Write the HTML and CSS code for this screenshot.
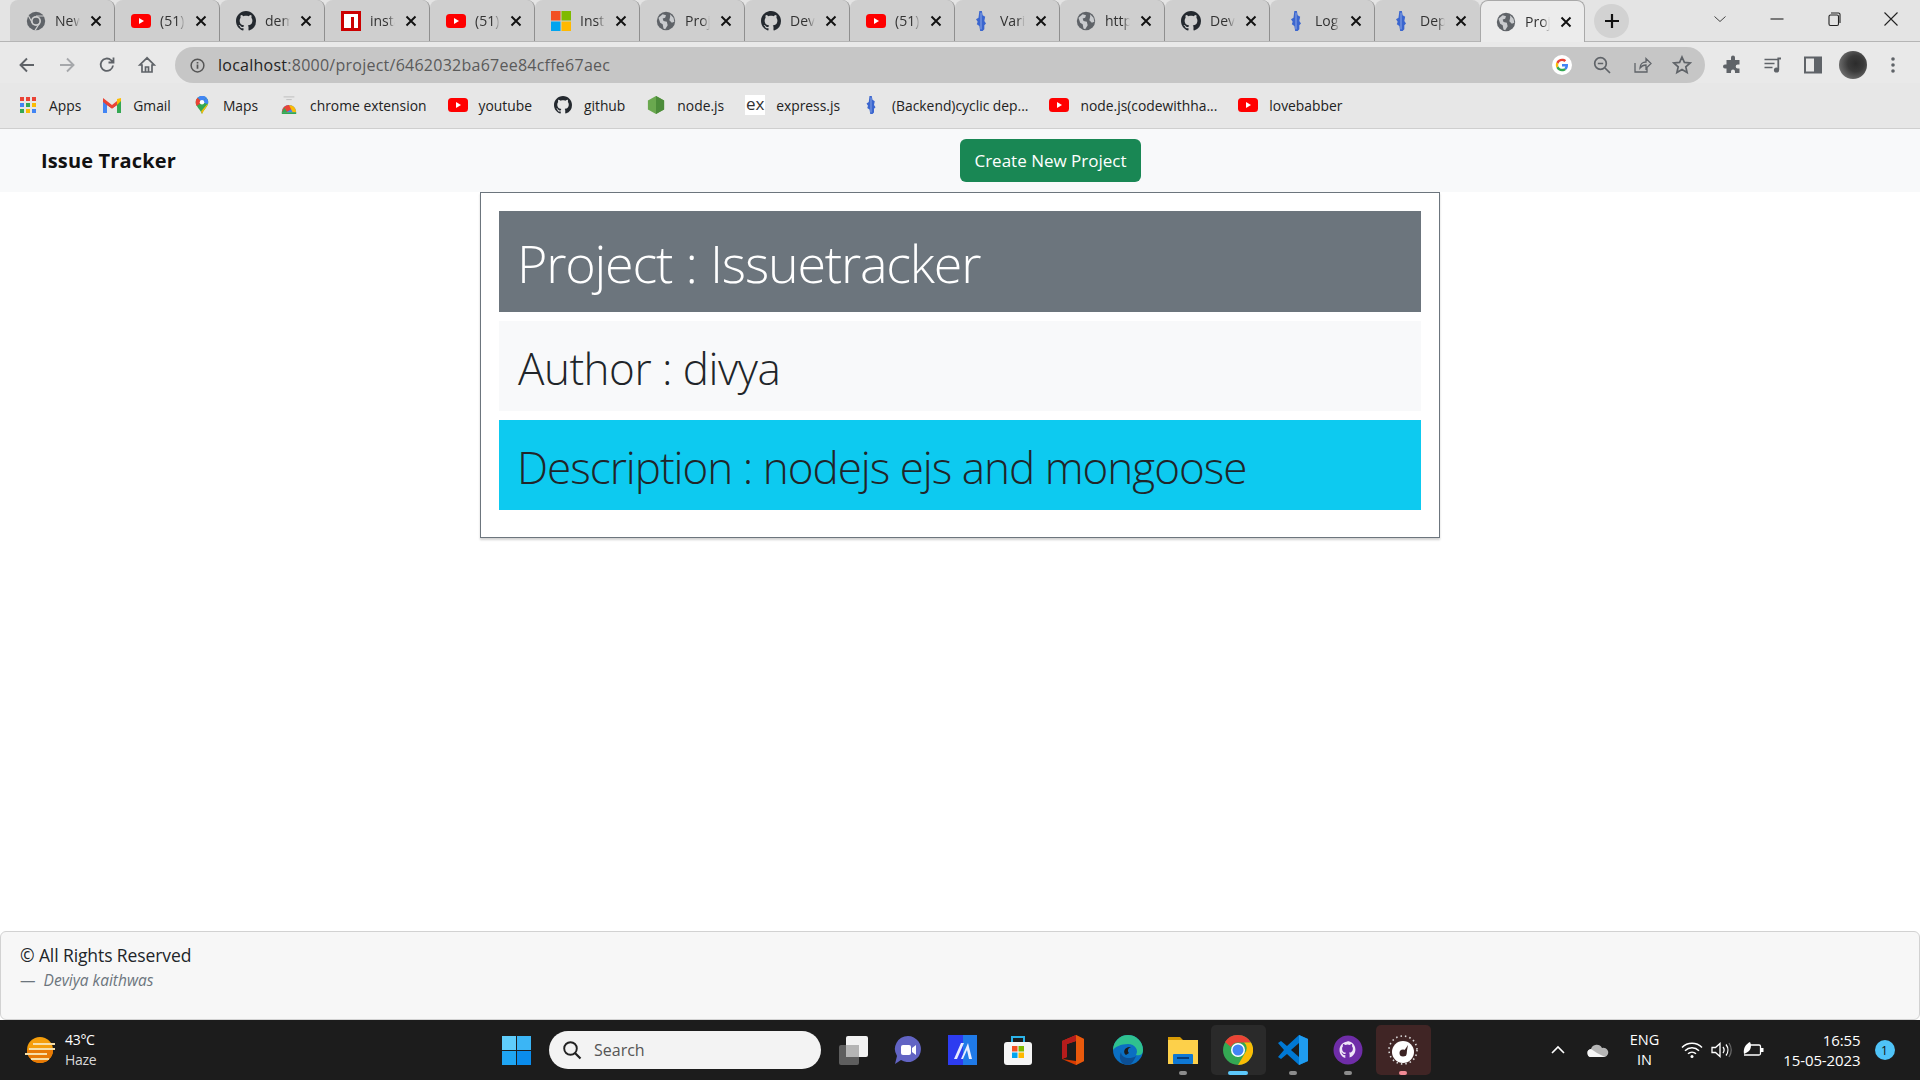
FILE: index.html
```html
<!DOCTYPE html>
<html lang="en">
<head>
<meta charset="utf-8">
<title>Project</title>
<link rel="stylesheet" href="styles.css">
</head>
<body>
<svg class="defs" xmlns="http://www.w3.org/2000/svg">
  <symbol id="i-chrome" viewBox="0 0 24 24"><circle cx="12" cy="12" r="11" fill="#5f6368"/><circle cx="12" cy="12" r="6" fill="#cfcfcf"/><circle cx="12" cy="12" r="4" fill="#5f6368"/><path d="M12 6h10M8 15L3 6M16 15l-5 8" stroke="#cfcfcf" stroke-width="1.4"/></symbol>
  <symbol id="i-yt" viewBox="0 0 20 14"><rect width="20" height="14" rx="3.5" fill="#f00"/><path d="M8 4l5 3-5 3z" fill="#fff"/></symbol>
  <symbol id="i-gh" viewBox="0 0 16 16"><path fill="#24292f" d="M8 0C3.58 0 0 3.58 0 8c0 3.54 2.29 6.53 5.47 7.59.4.07.55-.17.55-.38 0-.19-.01-.82-.01-1.49-2.01.37-2.53-.49-2.69-.94-.09-.23-.48-.94-.82-1.13-.28-.15-.68-.52-.01-.53.63-.01 1.08.58 1.23.82.72 1.21 1.87.87 2.33.66.07-.52.28-.87.51-1.07-1.78-.2-3.64-.89-3.64-3.95 0-.87.31-1.59.82-2.15-.08-.2-.36-1.02.08-2.12 0 0 .67-.21 2.2.82.64-.18 1.32-.27 2-.27s1.36.09 2 .27c1.53-1.04 2.2-.82 2.2-.82.44 1.1.16 1.92.08 2.12.51.56.82 1.27.82 2.15 0 3.07-1.87 3.75-3.65 3.95.29.25.54.73.54 1.48 0 1.07-.01 1.93-.01 2.2 0 .21.15.46.55.38A8.01 8.01 0 0016 8c0-4.42-3.58-8-8-8z"/></symbol>
  <symbol id="i-globe" viewBox="0 0 24 24"><circle cx="12" cy="12" r="11" fill="#5f6368"/><path d="M3 8l5-4 4 1-1 3-3 1 1 3 4 1 1 4-3 5-2-1-1-5-3-2zM17 4l4 4 1 5-3 1-3-3 1-4z" fill="#c9cbce"/></symbol>
  <symbol id="i-npm" viewBox="0 0 20 20"><rect width="20" height="20" fill="#c00"/><path d="M3 3h14v14h-4V6h-3v11H3z" fill="#fff"/></symbol>
  <symbol id="i-ms" viewBox="0 0 20 20"><rect width="9.5" height="9.5" fill="#f25022"/><rect x="10.5" width="9.5" height="9.5" fill="#7fba00"/><rect y="10.5" width="9.5" height="9.5" fill="#00a4ef"/><rect x="10.5" y="10.5" width="9.5" height="9.5" fill="#ffb900"/></symbol>
  <symbol id="i-render" viewBox="0 0 12 24"><path d="M4 0h3l1 5 3 2-1 5 2 3-2 2v5l-2 2H5l-1-6-3-2 1-3-2-3 3-2z" fill="#3b66cf"/><path d="M6 2v20" stroke="#9fb6ea" stroke-width="1"/></symbol>
  <symbol id="i-x" viewBox="0 0 12 12"><path d="M1.5 1.5l9 9M10.5 1.5l-9 9" stroke="#111" stroke-width="1.9" fill="none"/></symbol>
</svg>

<header class="tabstrip">
  <div class="tab"><svg class="fav"><use href="#i-chrome"/></svg><span class="tab-title">New</span><svg class="tab-x"><use href="#i-x"/></svg></div>
  <div class="tab"><svg class="fav"><use href="#i-yt"/></svg><span class="tab-title">(51)</span><svg class="tab-x"><use href="#i-x"/></svg></div>
  <div class="tab"><svg class="fav"><use href="#i-gh"/></svg><span class="tab-title">dem</span><svg class="tab-x"><use href="#i-x"/></svg></div>
  <div class="tab"><svg class="fav"><use href="#i-npm"/></svg><span class="tab-title">insta</span><svg class="tab-x"><use href="#i-x"/></svg></div>
  <div class="tab"><svg class="fav"><use href="#i-yt"/></svg><span class="tab-title">(51)</span><svg class="tab-x"><use href="#i-x"/></svg></div>
  <div class="tab"><svg class="fav"><use href="#i-ms"/></svg><span class="tab-title">Insta</span><svg class="tab-x"><use href="#i-x"/></svg></div>
  <div class="tab"><svg class="fav"><use href="#i-globe"/></svg><span class="tab-title">Proj</span><svg class="tab-x"><use href="#i-x"/></svg></div>
  <div class="tab"><svg class="fav"><use href="#i-gh"/></svg><span class="tab-title">Dev</span><svg class="tab-x"><use href="#i-x"/></svg></div>
  <div class="tab"><svg class="fav"><use href="#i-yt"/></svg><span class="tab-title">(51)</span><svg class="tab-x"><use href="#i-x"/></svg></div>
  <div class="tab"><svg class="fav"><use href="#i-render"/></svg><span class="tab-title">Vari</span><svg class="tab-x"><use href="#i-x"/></svg></div>
  <div class="tab"><svg class="fav"><use href="#i-globe"/></svg><span class="tab-title">http</span><svg class="tab-x"><use href="#i-x"/></svg></div>
  <div class="tab"><svg class="fav"><use href="#i-gh"/></svg><span class="tab-title">Dev</span><svg class="tab-x"><use href="#i-x"/></svg></div>
  <div class="tab"><svg class="fav"><use href="#i-render"/></svg><span class="tab-title">Log</span><svg class="tab-x"><use href="#i-x"/></svg></div>
  <div class="tab tab-last"><svg class="fav"><use href="#i-render"/></svg><span class="tab-title">Dep</span><svg class="tab-x"><use href="#i-x"/></svg></div>
  <div class="tab tab-active"><svg class="fav"><use href="#i-globe"/></svg><span class="tab-title">Proj</span><svg class="tab-x"><use href="#i-x"/></svg></div>
  <div class="newtab"><svg width="16" height="16" viewBox="0 0 16 16"><path d="M8 1v14M1 8h14" stroke="#111" stroke-width="2.2"/></svg></div>
  <div class="winctrls">
    <svg class="winbtn" viewBox="0 0 16 16"><path d="M2.5 5.5L8 10.5l5.5-5" fill="none" stroke="#444" stroke-width="1"/></svg>
    <svg class="winbtn" viewBox="0 0 16 16"><path d="M1.5 8h13" stroke="#222" stroke-width="1.1"/></svg>
    <svg class="winbtn" viewBox="0 0 16 16"><rect x="3" y="4" width="9.5" height="10.5" rx="1.5" fill="none" stroke="#222" stroke-width="1.1"/><path d="M5 2h7.5a1.5 1.5 0 011.5 1.5V12" fill="none" stroke="#222" stroke-width="1.1"/></svg>
    <svg class="winbtn" viewBox="0 0 16 16"><path d="M1.5 1.5l13 13M14.5 1.5l-13 13" stroke="#222" stroke-width="1.1"/></svg>
  </div>
</header>

<nav class="toolbar">
  <div class="tool-left">
    <svg class="tool" viewBox="0 0 20 20"><path d="M17 10H4M10 3.5L3.5 10l6.5 6.5" fill="none" stroke="#5f6368" stroke-width="1.9"/></svg>
    <svg class="tool" viewBox="0 0 20 20"><path d="M3 10h13M10 3.5l6.5 6.5-6.5 6.5" fill="none" stroke="#a6a8ab" stroke-width="1.9"/></svg>
    <svg class="tool" viewBox="0 0 20 20"><path d="M16 10.5a6.2 6.2 0 11-1.9-5.3L16.5 7.5M16.5 2.5v5h-5" fill="none" stroke="#5f6368" stroke-width="1.8"/></svg>
    <svg class="tool" viewBox="0 0 20 20"><path d="M10 2.8L2.8 10H5v7h10v-7h2.2zM8.5 17v-5h3v5" fill="none" stroke="#5f6368" stroke-width="1.7"/></svg>
  </div>
  <div class="omnibox">
    <svg class="omni-info" viewBox="0 0 16 16"><circle cx="8" cy="8" r="6.8" fill="none" stroke="#555" stroke-width="1.6"/><path d="M8 7v4.5M8 4.2v1.6" stroke="#555" stroke-width="1.8"/></svg>
    <span class="url"><span class="url-host">localhost</span>:8000/project/6462032ba67ee84cffe67aec</span>
    <div class="omni-right">
      <svg class="omni-tool" viewBox="0 0 20 20"><circle cx="10" cy="10" r="10" fill="#fff"/><path d="M16 10.2c0-.5 0-.9-.1-1.3H10v2.5h3.4c-.2.8-.6 1.4-1.2 1.9l1.9 1.5c1.2-1 1.9-2.6 1.9-4.6z" fill="#4285f4"/><path d="M10 16.2c1.7 0 3-.5 4.1-1.5l-1.9-1.5c-.6.4-1.3.6-2.2.6-1.7 0-3.1-1.1-3.6-2.6l-2 1.5c1 2.1 3.1 3.5 5.6 3.5z" fill="#34a853"/><path d="M6.4 11.2c-.3-.8-.3-1.7 0-2.4L4.4 7.3c-.8 1.7-.8 3.7 0 5.4z" fill="#fbbc05"/><path d="M10 6.1c.9 0 1.8.3 2.4.9l1.8-1.8C13.1 4.3 11.6 3.8 10 3.8c-2.5 0-4.6 1.4-5.6 3.5l2 1.5c.5-1.5 1.9-2.7 3.6-2.7z" fill="#ea4335"/></svg>
      <svg class="omni-tool" viewBox="0 0 20 20"><circle cx="8.5" cy="8.5" r="5.8" fill="none" stroke="#5f6368" stroke-width="1.7"/><path d="M5.8 8.5h5.4M13 13l5 5" stroke="#5f6368" stroke-width="1.7"/></svg>
      <svg class="omni-tool" viewBox="0 0 20 20"><path d="M3 8v9h12v-4M8 13c0-4 3-6 6-6V3.5l5 5-5 5V10c-2.5 0-4.5 1-6 3z" fill="none" stroke="#5f6368" stroke-width="1.3"/></svg>
      <svg class="omni-tool" viewBox="0 0 20 20"><path d="M10 2l2.4 5.4 5.8.6-4.4 3.9 1.3 5.7-5.100-3-5.100 3 1.300-5.700L1.800 8l5.800-.6z" fill="none" stroke="#5f6368" stroke-width="1.7"/></svg>
    </div>
  </div>
  <div class="tool-right">
    <svg class="tool" viewBox="0 0 20 20"><path d="M8 2.5a2 2 0 014 0V5h4.5v4.500h-1.800a2 2 0 000 4h1.800V18H12v-1.500a2 2 0 00-4 0V18H3.500v-4.500H2a2 2 0 010-4h1.500V5H8z" fill="#5f6368"/></svg>
    <svg class="tool" viewBox="0 0 20 20"><path d="M1.5 4.500h14M1.500 8.500h10M1.500 12.500h8" stroke="#5f6368" stroke-width="1.7"/><circle cx="13.5" cy="15" r="2.6" fill="#5f6368"/><path d="M15.3 15V3.500h2.700" fill="none" stroke="#5f6368" stroke-width="1.8"/></svg>
    <svg class="tool" viewBox="0 0 20 20"><rect x="2" y="2.5" width="16" height="15" fill="none" stroke="#5f6368" stroke-width="2"/><rect x="11" y="2.5" width="7" height="15" fill="#5f6368"/></svg>
    <div class="avatar"></div>
    <svg class="tool" viewBox="0 0 20 20"><circle cx="10" cy="4" r="1.8" fill="#5f6368"/><circle cx="10" cy="10" r="1.8" fill="#5f6368"/><circle cx="10" cy="16" r="1.8" fill="#5f6368"/></svg>
  </div>
</nav>

<div class="bookmarks">
  <div class="bm"><svg class="bm-ico" viewBox="0 0 18 18"><g><rect x="1" y="1" width="4" height="4" fill="#ea4335"/><rect x="7" y="1" width="4" height="4" fill="#ea4335"/><rect x="13" y="1" width="4" height="4" fill="#ea4335"/><rect x="1" y="7" width="4" height="4" fill="#4285f4"/><rect x="7" y="7" width="4" height="4" fill="#34a853"/><rect x="13" y="7" width="4" height="4" fill="#fbbc05"/><rect x="1" y="13" width="4" height="4" fill="#34a853"/><rect x="7" y="13" width="4" height="4" fill="#fbbc05"/><rect x="13" y="13" width="4" height="4" fill="#4285f4"/></g></svg><span>Apps</span></div>
  <div class="bm"><svg class="bm-ico" viewBox="0 0 20 16"><path d="M1 16V3l9 6.5L19 3v13h-4V8l-5 3.5L5 8v8z" fill="#c5221f"/><path d="M1 3v13h4V8z" fill="#4285f4"/><path d="M19 3v13h-4V8z" fill="#34a853"/><path d="M15 2l4-1v3l-4 4z" fill="#fbbc05"/><path d="M1 1l9 7 5-4v4l-5 3.500L1 5z" fill="#ea4335"/></svg><span>Gmail</span></div>
  <div class="bm"><svg class="bm-ico" viewBox="0 0 14 20"><path d="M7 20C5 15 0 11.500 0 7a7 7 0 0114 0c0 4.500-5 8-7 13z" fill="#34a853"/><path d="M2 2a7 7 0 0110-.2L7 7z" fill="#4285f4"/><path d="M12 2a7 7 0 011.400 7L7 7z" fill="#4285f4"/><path d="M0 7a7 7 0 012-5l5 5-6 4a7 7 0 01-1-4z" fill="#ea4335"/><path d="M13.500 9.500C12 13 8.300 16.500 7 20l-1-3 7-8z" fill="#fbbc05"/><circle cx="7" cy="7" r="2.5" fill="#fff"/></svg><span>Maps</span></div>
  <div class="bm"><svg class="bm-ico" viewBox="0 0 18 20"><path d="M3 1h12M6 4h6" stroke="#bbb" stroke-width="1"/><path d="M1 18a8 8 0 0116 0z" fill="#4285f4"/><path d="M1 18a8 8 0 018-8l4 4-7 4z" fill="#ea4335"/><path d="M1 18l3-5 3 5z" fill="#34a853"/><path d="M9 10a8 8 0 018 8h-4z" fill="#fbbc05"/><rect x="1" y="18" width="16" height="2" fill="#34a853"/></svg><span>chrome extension</span></div>
  <div class="bm"><svg class="bm-ico"><use href="#i-yt"/></svg><span>youtube</span></div>
  <div class="bm"><svg class="bm-ico"><use href="#i-gh"/></svg><span>github</span></div>
  <div class="bm"><svg class="bm-ico" viewBox="0 0 18 20"><path d="M9 0l9 5v10l-9 5-9-5V5z" fill="#6aa84f"/><path d="M9 0l9 5v10l-9 5z" fill="#4c8c3a"/></svg><span>node.js</span></div>
  <div class="bm"><span class="ex-ico">ex</span><span>express.js</span></div>
  <div class="bm"><svg class="bm-ico"><use href="#i-render"/></svg><span>(Backend)cyclic dep...</span></div>
  <div class="bm"><svg class="bm-ico"><use href="#i-yt"/></svg><span>node.js(codewithha...</span></div>
  <div class="bm"><svg class="bm-ico"><use href="#i-yt"/></svg><span>lovebabber</span></div>
</div>

<div class="viewport">
  <div class="navbar">
    <div class="navbar-side"><a class="brand">Issue Tracker</a></div>
    <div class="navbar-side"><a class="btn-success">Create New Project</a></div>
  </div>
  <main class="main">
    <section class="project-box">
      <div class="row row-title"><h1 class="d-title">Project : Issuetracker</h1></div>
      <div class="row row-author"><h2 class="d-sub d-author">Author : divya</h2></div>
      <div class="row row-desc"><h2 class="d-sub d-desc">Description : nodejs ejs and mongoose</h2></div>
    </section>
  </main>
  <footer class="card-footer">
    <p class="quote">© All Rights Reserved</p>
    <p class="byline">— &nbsp;<cite>Deviya kaithwas</cite></p>
  </footer>
</div>

<div class="taskbar">
  <div class="tb-left">
    <svg class="weather" viewBox="0 0 30 28"><circle cx="15" cy="14" r="13" fill="#f59e0b"/><path d="M2 14a13 13 0 0026 0z" fill="#e87a05"/><path d="M8 8h22M4 13h26M0 18h22M6 23h18" stroke="#f7dfa8" stroke-width="2"/></svg>
    <div class="weather-text"><span>43°C</span><span class="haze">Haze</span></div>
  </div>
  <div class="tb-center">
    <svg class="winlogo" viewBox="0 0 30 30"><rect width="14.5" height="14.5" fill="#5fcdfb"/><rect x="15.5" width="14.5" height="14.5" fill="#3bb5f5"/><rect y="15.5" width="14.5" height="14.5" fill="#1fa5f3"/><rect x="15.5" y="15.5" width="14.5" height="14.5" fill="#0a8cec"/></svg>
    <div class="search"><svg class="search-ico" viewBox="0 0 20 20"><circle cx="8.5" cy="8.5" r="6.3" fill="none" stroke="#222" stroke-width="1.9"/><path d="M13 13l5.500 5.500" stroke="#222" stroke-width="2.2"/></svg><span>Search</span></div>
    <div class="apps">
      <div class="app"><svg class="app-ico" viewBox="0 0 30 30"><rect x="1" y="10" width="20" height="20" rx="2" fill="#5e5e5e"/><rect x="8" y="1" width="22" height="21" rx="2" fill="#f2f2f2"/><rect x="8" y="10" width="13" height="12" fill="#b5b5b5"/></svg></div>
      <div class="app"><svg class="app-ico" viewBox="0 0 30 30"><path d="M15 1a13 13 0 11-7 24l-6 4 2-8A13 13 0 0115 1z" fill="#6264c4"/><rect x="8" y="10" width="10" height="10" rx="2" fill="#fff"/><path d="M19 13l4-3v10l-4-3z" fill="#fff"/></svg></div>
      <div class="app"><svg class="app-ico" viewBox="0 0 30 30"><rect width="29" height="30" fill="#2d3cf0"/><rect x="15" width="14" height="30" fill="#1f7ae8"/><path d="M6 24l7-16h3l-7 16zM13 24l7-16 4 16h-3l-2-9-4 9z" fill="#e8ecff"/></svg></div>
      <div class="app"><svg class="app-ico" viewBox="0 0 30 30"><path d="M9 7V2h12v5" fill="none" stroke="#2bb3e8" stroke-width="2"/><rect x="1" y="7" width="28" height="23" rx="3" fill="#f5f5f5"/><rect x="9" y="11" width="5.5" height="5.5" fill="#f25022"/><rect x="15.5" y="11" width="5.5" height="5.5" fill="#7fba00"/><rect x="9" y="17.5" width="5.5" height="5.5" fill="#00a4ef"/><rect x="15.5" y="17.5" width="5.5" height="5.5" fill="#ffb900"/></svg></div>
      <div class="app"><svg class="app-ico" viewBox="0 0 30 30"><path d="M4 6l14-6 8 4v22l-8 4-14-6 14 2V6L9 9v13l-5 2z" fill="#d83b01"/><path d="M4 6l14-6v6L9 9v13l-5 2z" fill="#b51c1c"/><path d="M18 0l8 4v22l-8 4z" fill="#e8590c"/></svg></div>
      <div class="app"><svg class="app-ico" viewBox="0 0 30 30"><circle cx="15" cy="15" r="15" fill="#0b6fc2"/><path d="M0 15A15 15 0 0130 15c0 5-4 6-7 5 3-5-1-11-8-11C8 9 2 12 0 15z" fill="#2fc18f"/><path d="M15 30c-7 0-10-7-7-13 0 6 9 8 15 4-2 5-5 9-8 9z" fill="#0c4f94"/><path d="M13 20c-4-3-1-9 5-8-3 1-4 4-2 6z" fill="#1c1c1c"/></svg></div>
      <div class="app app-run"><svg class="app-ico" viewBox="0 0 30 30"><path d="M0 2h12l3 3h-15z" fill="#d89b05"/><rect y="5" width="30" height="24" fill="#fdd04a"/><rect x="5" y="19" width="20" height="10" rx="1" fill="#0f78d4"/><rect x="9" y="22" width="12" height="2" fill="#083c78"/></svg></div>
      <div class="app app-active"><svg class="app-ico" viewBox="0 0 30 30"><circle cx="15" cy="15" r="15" fill="#34a853"/><path d="M15 0a15 15 0 0113 7.5H15a7.5 7.5 0 00-7 4.500L2 7a15 15 0 0113-7z" fill="#ea4335"/><path d="M28 7.500A15 15 0 0115 30l7-12a7.5 7.5 0 00-1-10.500z" fill="#fbbc05"/><circle cx="15" cy="15" r="7" fill="#fff"/><circle cx="15" cy="15" r="5.5" fill="#4285f4"/></svg></div>
      <div class="app app-run"><svg class="app-ico" viewBox="0 0 30 30"><path d="M21 0l9 4v22l-9 4-12-11-6 5-3-2 6-7-6-7 3-2 6 5z" fill="#0078d4"/><path d="M21 8l-8 7 8 7z" fill="#1c1c1c"/><path d="M21 0l9 4v22l-9 4z" fill="#1f9cf0"/></svg></div>
      <div class="app app-run"><svg class="app-ico" viewBox="0 0 30 30"><circle cx="15" cy="15" r="14.5" fill="#6f2da8"/><path d="M15 6.500c-4.700 0-8.500 3.800-8.500 8.500 0 3.800 2.400 7 5.800 8.100v-3c-2.200.5-2.700-1-2.700-1-.4-.9-.9-1.200-.9-1.200-.7-.5.100-.5.100-.5.800.1 1.200.8 1.200.8.700 1.200 1.900.9 2.400.7.100-.5.300-.9.500-1.100-1.900-.2-3.800-.9-3.800-4.200 0-.9.300-1.700.9-2.300-.1-.2-.4-1.100.1-2.300 0 0 .7-.2 2.300.9a8 8 0 014.200 0c1.600-1.100 2.300-.9 2.300-.9.500 1.200.2 2.100.1 2.300.5.600.9 1.400.9 2.300 0 3.300-2 4-3.900 4.200.3.300.6.800.6 1.600v3.200c3.400-1.100 5.800-4.300 5.800-8.100 0-4.700-3.800-8.500-8.500-8.500z" fill="#efe6f7"/></svg></div>
      <div class="app app-pink"><svg class="app-ico" viewBox="0 0 30 30"><circle cx="15" cy="17" r="11" fill="#fff"/><path d="M14 19l6-9-2 11z" fill="#3b2222"/><circle cx="15" cy="18" r="3.5" fill="#3b2222"/><circle cx="15" cy="15" r="14" fill="none" stroke="#ddd" stroke-width="1.6" stroke-dasharray="1.5 3"/></svg></div>
    </div>
  </div>
  <div class="tb-right">
    <svg class="tray-chev" viewBox="0 0 16 10"><path d="M2 8l6-6 6 6" fill="none" stroke="#fff" stroke-width="1.6"/></svg>
    <svg class="tray-cloud" viewBox="0 0 22 14"><path d="M5 14a4 4 0 01-1-8 6 6 0 0111-1 4.500 4.500 0 013 9z" fill="#b5b5b5"/><path d="M5 14a4 4 0 01-1-8l6 4 8 4z" fill="#f5f5f5"/></svg>
    <div class="lang"><span>ENG</span><span>IN</span></div>
    <svg class="tray-wifi" viewBox="0 0 22 16"><path d="M1 5.500a14 14 0 0120 0M4 8.700a10 10 0 0114 0M7 11.700a6 6 0 018 0" fill="none" stroke="#fff" stroke-width="1.5"/><circle cx="11" cy="14.5" r="1.5" fill="#fff"/></svg>
    <svg class="tray-vol" viewBox="0 0 22 16"><path d="M1 5.500h3.500L9 1.500v13l-4.500-4H1z" fill="none" stroke="#fff" stroke-width="1.3"/><path d="M12 5a5 5 0 010 6M15 2.500a9 9 0 010 11" fill="none" stroke="#fff" stroke-width="1.3"/><path d="M18 1a13 13 0 010 14" fill="none" stroke="#666" stroke-width="1.3"/></svg>
    <svg class="tray-bat" viewBox="0 0 22 16"><path d="M7 3h10a1.500 1.500 0 011.500 1.500v7A1.500 1.500 0 0117 13H2" fill="none" stroke="#fff" stroke-width="1.3"/><rect x="19" y="6" width="2.5" height="4" fill="#fff"/><path d="M2 12C1 6 4 2 8 0c2 4 1 9-4 11z" fill="#fff"/></svg>
    <div class="clock"><span>16:55</span><span>15-05-2023</span></div>
    <div class="notif">1</div>
  </div>
</div>
</body>
</html>
```
FILE: styles.css
```css
* { box-sizing: border-box; }
html, body { margin: 0; padding: 0; height: 100%; }
body {
  width: 1920px;
  height: 1080px;
  overflow: hidden;
  display: flex;
  flex-direction: column;
  font-family: "Open Sans", "Noto Sans", sans-serif;
  background: #fff;
}
.defs { display: none; }

/* Tab strip */
.tabstrip {
  height: 42px;
  display: flex;
  align-items: stretch;
  padding-left: 10px;
  background: #e4e4e4;
  border-bottom: 1px solid #b5b5b5;
  flex: none;
}
.tab {
  width: 105px;
  flex: none;
  display: flex;
  align-items: center;
  padding-left: 16px;
  background: #cfcfcf;
  border-right: 1px solid #8f8f8f;
  border-radius: 8px 8px 0 0;
  background-clip: padding-box;
}
.tab-last { border-right: none; }
.tab-active {
  background: #ececec;
  border: 1px solid #a9a9a9;
  border-bottom: none;
  height: 42px;
  padding-left: 15px;
}
.fav { width: 20px; height: 20px; flex: none; }
.tab-title {
  width: 25px;
  margin-left: 9px;
  overflow: hidden;
  white-space: nowrap;
  font-size: 14px;
  color: #333;
  flex: none;
  -webkit-mask-image: linear-gradient(90deg, #000 70%, transparent);
  mask-image: linear-gradient(90deg, #000 70%, transparent);
}
.tab-x { width: 12px; height: 12px; margin-left: 10px; flex: none; }
.newtab {
  width: 35px;
  height: 34px;
  margin: 4px 0 0 9px;
  border-radius: 50%;
  background: #d2d2d2;
  display: flex;
  align-items: center;
  justify-content: center;
  flex: none;
}
.winctrls {
  display: flex;
  flex: 1;
  padding: 0 21px 4px 0;
  justify-content: flex-end;
  gap: 41px;
  align-items: center;
}
.winbtn { width: 16px; height: 16px; }

/* Toolbar */
.toolbar {
  height: 41px;
  flex: none;
  display: flex;
  align-items: center;
  background: #e9e9e9;
  padding-top: 5px;
}
.tool-left { display: flex; width: 175px; padding-left: 17px; gap: 20px; flex: none; }
.tool { width: 20px; height: 20px; flex: none; }
.omnibox {
  width: 1530px;
  height: 36px;
  flex: none;
  background: #c6c6c6;
  border-radius: 18px;
  display: flex;
  align-items: center;
  padding: 0 13px 0 15px;
}
.omni-info { width: 15px; height: 15px; flex: none; }
.url { margin-left: 13px; font-size: 16px; letter-spacing: 0.25px; color: #5a5a5a; white-space: nowrap; }
.url-host { color: #222; }
.omni-right { margin-left: auto; display: flex; gap: 20px; align-items: center; }
.omni-tool { width: 20px; height: 20px; }
.tool-right { display: flex; gap: 20px; padding-left: 18px; align-items: center; }
.avatar {
  width: 28px;
  height: 28px;
  margin: 0 -4px;
  border-radius: 50%;
  background: radial-gradient(circle at 60% 45%, #2c2c2c, #3a3a3a 35%, #6d6d6d 75%);
  flex: none;
}

/* Bookmarks */
.bookmarks {
  height: 46px;
  flex: none;
  display: flex;
  align-items: center;
  background: #e7e7e7;
  border-bottom: 1px solid #cfcfcf;
  padding: 0 0 1px 18px;
  gap: 21px;
  font-size: 13.85px;
  color: #222;
}
.bm { display: flex; align-items: center; gap: 11px; white-space: nowrap; }
.bm-ico { width: 20px; height: 18px; flex: none; }
.ex-ico {
  width: 20px;
  height: 20px;
  background: #fff;
  text-align: center;
  font-size: 17px;
  line-height: 18px;
  color: #333;
  flex: none;
}

/* Page */
.viewport { flex: 1; display: flex; flex-direction: column; min-height: 0; }
.navbar { height: 63px; flex: none; display: flex; align-items: center; background: #f8f9fa; }
.navbar-side { flex: 0 0 50%; display: flex; }
.navbar-side:first-child { padding-left: 41px; }
.brand { font-size: 20px; font-weight: 700; color: #111; letter-spacing: 0.15px; }
.btn-success {
  width: 181px;
  height: 43px;
  display: flex;
  align-items: center;
  justify-content: center;
  background: #198754;
  color: #fff;
  font-size: 17px;
  border-radius: 6px;
}
.main { flex: 1; display: flex; justify-content: center; align-items: flex-start; }
.project-box {
  width: 960px;
  height: 346px;
  padding: 18px 18px 0;
  border: 1px solid #6c757d;
  box-shadow: 0 2px 2px rgba(0, 0, 0, .18);
  display: flex;
  flex-direction: column;
  gap: 9px;
}
.row { padding-left: 18px; overflow: hidden; }
.row-title { height: 101px; background: #6c757d; color: #fff; }
.row-author { height: 90px; background: #f8f9fa; color: #212529; }
.row-desc { height: 90px; background: #0dcaf0; color: #212529; }
.d-title { margin: 21px 0 0; font-size: 52px; line-height: 1.2; font-weight: 300; letter-spacing: -1.2px; word-spacing: 1px; }
.d-sub { margin: 21px 0 0; font-size: 44px; line-height: 1.2; font-weight: 300; }
.d-author { letter-spacing: -0.5px; padding-left: 1px; }
.d-desc { letter-spacing: -1px; }
.card-footer {
  height: 89px;
  flex: none;
  padding: 10px 19px;
  background: #f7f7f7;
  border: 1px solid #d2d2d2;
  border-radius: 6px;
}
.quote { margin: 0; font-size: 17.5px; color: #212529; line-height: 26px; letter-spacing: -0.1px; }
.byline { margin: 0; font-size: 15.5px; color: #6c757d; line-height: 24px; }

/* Taskbar */
.taskbar {
  height: 60px;
  flex: none;
  display: flex;
  align-items: center;
  background: #1c1c1c;
  color: #fff;
}
.tb-left { width: 502px; flex: none; display: flex; align-items: center; padding-left: 25px; gap: 10px; }
.weather { width: 30px; height: 28px; flex: none; }
.weather-text { display: flex; flex-direction: column; font-size: 14px; line-height: 20px; letter-spacing: -0.3px; }
.haze { color: #d8d8d8; }
.tb-center { display: flex; align-items: center; flex: none; }
.winlogo { width: 29px; height: 29px; flex: none; }
.search {
  width: 272px;
  height: 38px;
  margin-left: 18px;
  background: #f3f3f3;
  border-radius: 19px;
  display: flex;
  align-items: center;
  padding-left: 13px;
  color: #555;
  font-size: 16px;
  flex: none;
}
.search-ico { width: 20px; height: 20px; margin-right: 12px; }
.apps { display: flex; margin-left: 4.5px; }
.app {
  width: 55px;
  height: 50px;
  display: flex;
  align-items: center;
  justify-content: center;
  position: relative;
  border-radius: 5px;
}
.app-ico { width: 30px; height: 30px; }
.app-run::after, .app-active::after, .app-pink::after {
  content: "";
  position: absolute;
  bottom: 0;
  left: 50%;
  width: 8px;
  height: 4px;
  margin-left: -4px;
  border-radius: 2px;
  background: #8c8c8c;
}
.app-active { background: #2a2a2a; }
.app-active::after { width: 20px; margin-left: -10px; background: #5cc8fb; }
.app-pink { background: #402525; }
.app-pink::after { background: #f08b95; }
.tb-right { flex: 1; display: flex; align-items: center; padding-left: 119px; }
.tray-chev { width: 16px; height: 10px; flex: none; }
.tray-cloud { width: 22px; height: 14px; margin-left: 21px; flex: none; }
.lang { width: 60px; margin-left: 6px; display: flex; flex-direction: column; align-items: center; font-size: 14.5px; line-height: 20px; flex: none; }
.tray-wifi { width: 22px; height: 16px; margin-left: 6px; flex: none; }
.tray-vol { width: 22px; height: 16px; margin-left: 8px; flex: none; }
.tray-bat { width: 22px; height: 16px; margin-left: 9px; flex: none; }
.clock { width: 96px; margin-left: 1px; display: flex; flex-direction: column; align-items: flex-end; font-size: 15px; line-height: 20px; letter-spacing: -0.1px; flex: none; }
.notif {
  width: 20px;
  height: 20px;
  margin-left: 14px;
  border-radius: 50%;
  background: #4fc3f7;
  color: #111;
  font-size: 12px;
  display: flex;
  align-items: center;
  justify-content: center;
  flex: none;
}
```
